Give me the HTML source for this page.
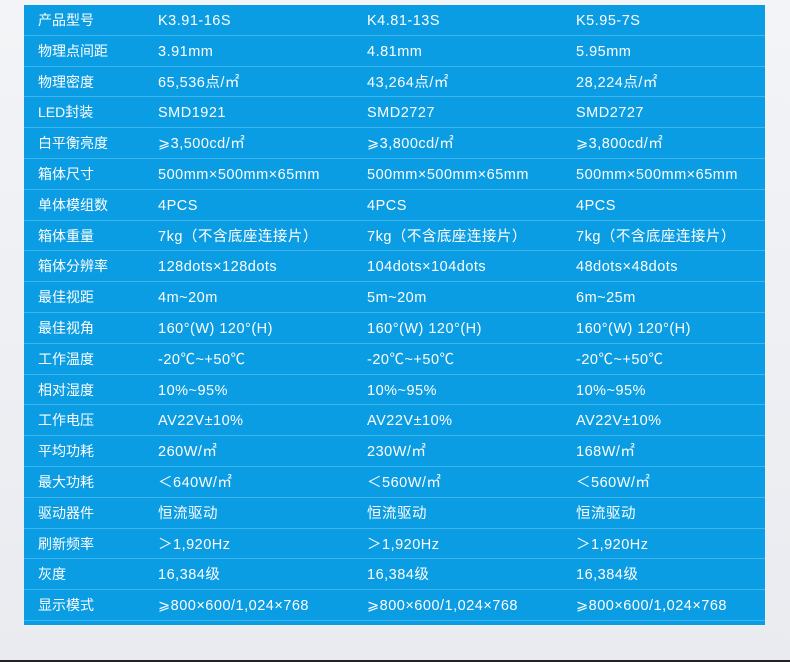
<!DOCTYPE html><html><head><meta charset="utf-8"><style>
body{margin:0;width:790px;height:662px;background:linear-gradient(#f3f4f7,#e9ebf0);position:relative;overflow:hidden;font-family:"Liberation Sans","Noto Sans CJK SC",sans-serif}
.t{position:absolute;left:24px;top:5px;width:741px;height:620px;background:#0a9de3}
.r{height:29.8px;border-bottom:1px solid #3db6ee;position:relative;color:#fff;font-size:14px;line-height:30px}
.r span{position:absolute;top:0}
.r span.b,.r span.c,.r span.d{letter-spacing:0.5px;font-size:14.5px;top:1px}
.a{left:14px}.b{left:134px}.c{left:343px}.d{left:552px}
.bot{position:absolute;left:0;top:660px;width:790px;height:2px;background:#222}
</style></head><body><div class="t">
<div class="r"><span class="a">产品型号</span><span class="b">K3.91-16S</span><span class="c">K4.81-13S</span><span class="d">K5.95-7S</span></div>
<div class="r"><span class="a">物理点间距</span><span class="b">3.91mm</span><span class="c">4.81mm</span><span class="d">5.95mm</span></div>
<div class="r"><span class="a">物理密度</span><span class="b">65,536点/㎡</span><span class="c">43,264点/㎡</span><span class="d">28,224点/㎡</span></div>
<div class="r"><span class="a">LED封装</span><span class="b">SMD1921</span><span class="c">SMD2727</span><span class="d">SMD2727</span></div>
<div class="r"><span class="a">白平衡亮度</span><span class="b">⩾3,500cd/㎡</span><span class="c">⩾3,800cd/㎡</span><span class="d">⩾3,800cd/㎡</span></div>
<div class="r"><span class="a">箱体尺寸</span><span class="b">500mm×500mm×65mm</span><span class="c">500mm×500mm×65mm</span><span class="d">500mm×500mm×65mm</span></div>
<div class="r"><span class="a">单体模组数</span><span class="b">4PCS</span><span class="c">4PCS</span><span class="d">4PCS</span></div>
<div class="r"><span class="a">箱体重量</span><span class="b">7kg（不含底座连接片）</span><span class="c">7kg（不含底座连接片）</span><span class="d">7kg（不含底座连接片）</span></div>
<div class="r"><span class="a">箱体分辨率</span><span class="b">128dots×128dots</span><span class="c">104dots×104dots</span><span class="d">48dots×48dots</span></div>
<div class="r"><span class="a">最佳视距</span><span class="b">4m~20m</span><span class="c">5m~20m</span><span class="d">6m~25m</span></div>
<div class="r"><span class="a">最佳视角</span><span class="b">160°(W) 120°(H)</span><span class="c">160°(W) 120°(H)</span><span class="d">160°(W) 120°(H)</span></div>
<div class="r"><span class="a">工作温度</span><span class="b">-20℃~+50℃</span><span class="c">-20℃~+50℃</span><span class="d">-20℃~+50℃</span></div>
<div class="r"><span class="a">相对湿度</span><span class="b">10%~95%</span><span class="c">10%~95%</span><span class="d">10%~95%</span></div>
<div class="r"><span class="a">工作电压</span><span class="b">AV22V±10%</span><span class="c">AV22V±10%</span><span class="d">AV22V±10%</span></div>
<div class="r"><span class="a">平均功耗</span><span class="b">260W/㎡</span><span class="c">230W/㎡</span><span class="d">168W/㎡</span></div>
<div class="r"><span class="a">最大功耗</span><span class="b">＜640W/㎡</span><span class="c">＜560W/㎡</span><span class="d">＜560W/㎡</span></div>
<div class="r"><span class="a">驱动器件</span><span class="b">恒流驱动</span><span class="c">恒流驱动</span><span class="d">恒流驱动</span></div>
<div class="r"><span class="a">刷新频率</span><span class="b">＞1,920Hz</span><span class="c">＞1,920Hz</span><span class="d">＞1,920Hz</span></div>
<div class="r"><span class="a">灰度</span><span class="b">16,384级</span><span class="c">16,384级</span><span class="d">16,384级</span></div>
<div class="r"><span class="a">显示模式</span><span class="b">⩾800×600/1,024×768</span><span class="c">⩾800×600/1,024×768</span><span class="d">⩾800×600/1,024×768</span></div>
</div><div class="bot"></div></body></html>
